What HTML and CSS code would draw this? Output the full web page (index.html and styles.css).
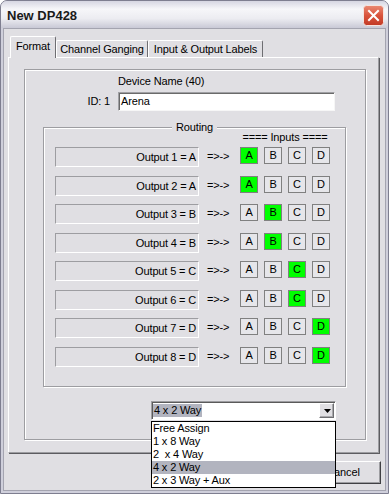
FILE: index.html
```html
<!DOCTYPE html>
<html>
<head>
<meta charset="utf-8">
<title>New DP428</title>
<link rel="stylesheet" href="styles.css">
</head>
<body>
<div class="window">
  <div class="titlebar">
    <span class="title">New DP428</span>
    <span class="close">
      <svg width="21" height="21" viewBox="0 0 21 21">
        <defs>
          <linearGradient id="cg" x1="0" y1="0" x2="0" y2="1">
            <stop offset="0" stop-color="#ea8a74"/>
            <stop offset="0.5" stop-color="#d9533c"/>
            <stop offset="1" stop-color="#c23a26"/>
          </linearGradient>
        </defs>
        <rect x="0.5" y="0.5" width="20" height="20" rx="3" fill="url(#cg)" stroke="#f4e4e0"/>
        <path d="M6 6 L15 15 M15 6 L6 15" stroke="#fff" stroke-width="2" stroke-linecap="square"/>
      </svg>
    </span>
  </div>
  <div class="frame">
    <div class="client">
      <div class="tabs">
        <div class="tab tab-format sel">Format</div>
        <div class="tab tab-gang">Channel Ganging</div>
        <div class="tab tab-labels">Input &amp; Output Labels</div>
      </div>
      <div class="panel">
        <div class="group">
          <div class="device">
            <span></span><span class="dn">Device Name (40)</span>
            <span class="idl">ID: 1</span><div class="field">Arena</div>
          </div>
          <div class="routing">
            <div class="rtitle">Routing</div>
            <div class="inhead">==== Inputs ====</div>
            <div class="rows">
              <div class="row"><div class="out">Output 1 = A</div><div class="arrow">=&gt;-&gt;</div><div class="btns"><span class="b on">A</span><span class="b">B</span><span class="b">C</span><span class="b">D</span></div></div>
              <div class="row"><div class="out">Output 2 = A</div><div class="arrow">=&gt;-&gt;</div><div class="btns"><span class="b on">A</span><span class="b">B</span><span class="b">C</span><span class="b">D</span></div></div>
              <div class="row"><div class="out">Output 3 = B</div><div class="arrow">=&gt;-&gt;</div><div class="btns"><span class="b">A</span><span class="b on">B</span><span class="b">C</span><span class="b">D</span></div></div>
              <div class="row"><div class="out">Output 4 = B</div><div class="arrow">=&gt;-&gt;</div><div class="btns"><span class="b">A</span><span class="b on">B</span><span class="b">C</span><span class="b">D</span></div></div>
              <div class="row"><div class="out">Output 5 = C</div><div class="arrow">=&gt;-&gt;</div><div class="btns"><span class="b">A</span><span class="b">B</span><span class="b on">C</span><span class="b">D</span></div></div>
              <div class="row"><div class="out">Output 6 = C</div><div class="arrow">=&gt;-&gt;</div><div class="btns"><span class="b">A</span><span class="b">B</span><span class="b on">C</span><span class="b">D</span></div></div>
              <div class="row"><div class="out">Output 7 = D</div><div class="arrow">=&gt;-&gt;</div><div class="btns"><span class="b">A</span><span class="b">B</span><span class="b">C</span><span class="b on">D</span></div></div>
              <div class="row"><div class="out">Output 8 = D</div><div class="arrow">=&gt;-&gt;</div><div class="btns"><span class="b">A</span><span class="b">B</span><span class="b">C</span><span class="b on">D</span></div></div>
            </div>
          </div>
          <div class="combo">
            <div class="cval"><span class="csel">4 x 2 Way</span></div>
            <div class="cbtn">
              <svg width="7" height="4" viewBox="0 0 7 4"><path d="M0 0 H7 L3.5 4 Z" fill="#000"/></svg>
            </div>
            <ul class="list">
              <li>Free Assign</li>
              <li>1 x 8 Way</li>
              <li>2  x 4 Way</li>
              <li class="hl">4 x 2 Way</li>
              <li>2 x 3 Way + Aux</li>
            </ul>
          </div>
        </div>
      </div>
      <div class="actions">
        <div class="btn">Cancel</div>
      </div>
    </div>
  </div>
</div>
</body>
</html>
```
FILE: styles.css
```css
html, body {
  margin: 0;
  padding: 0;
  background: #ffffff;
}
body {
  font-family: "Liberation Sans", Arial, sans-serif;
  font-size: 11px;
  letter-spacing: -0.15px;
  color: #000;
}
.window {
  width: 389px;
  height: 494px;
  box-sizing: border-box;
  border: 1px solid #7e7e90;
  border-radius: 7px 7px 0 0;
  background: #cfcfdb;
  display: flex;
  flex-direction: column;
  overflow: hidden;
}
.titlebar {
  height: 27px;
  flex: none;
  display: flex;
  align-items: flex-start;
  padding-left: 6px;
  background: linear-gradient(#d6d6e2 0%, #f6f6f9 30%, #ececf1 65%, #c9c9d6 100%);
}
.title {
  margin-top: 7px;
  font-size: 13px;
  line-height: 15px;
  font-weight: bold;
  letter-spacing: 0;
  color: #1a1a1a;
}
.close {
  margin-left: auto;
  margin-right: 4px;
  margin-top: 4px;
  width: 21px;
  height: 21px;
  display: block;
}
.close svg { display: block; }
.frame {
  flex: 1;
  display: flex;
  padding: 0 2px 2px 2px;
}
.client {
  flex: 1;
  border: 1px solid #a4a4b0;
  background: #e0dfe3;
  display: flex;
  flex-direction: column;
}
.tabs {
  display: flex;
  align-items: flex-end;
  margin: 7px 0 0 6px;
  height: 21px;
}
.tab {
  box-sizing: border-box;
  height: 17px;
  border: 1px solid;
  border-color: #ffffff #6e6e72 transparent #ffffff;
  border-bottom: none;
  border-radius: 2px 2px 0 0;
  text-align: center;
  line-height: 13px;
  padding-top: 2px;
  background: #e0dfe3;
  white-space: nowrap;
}
.tab.sel {
  height: 22px;
  margin-bottom: -1px;
  padding-top: 3px;
  position: relative;
  z-index: 1;
}
.tab-format { width: 46px; }
.tab-gang { width: 92px; }
.tab-labels { width: 115px; }
.panel {
  margin-left: 4px;
  width: 371px;
  height: 396px;
  box-sizing: border-box;
  border: 1px solid;
  border-color: #ffffff #9d9da1 #9d9da1 #ffffff;
  box-shadow: 1px 1px 0 #5c5c60;
  flex: none;
}
.group {
  margin: 11px 0 0 15px;
  width: 342px;
  height: 371px;
  box-sizing: border-box;
  border: 1px solid #9d9da1;
  box-shadow: inset 1px 1px 0 #ffffff, 1px 1px 0 #ffffff;
}
.device {
  display: grid;
  grid-template-columns: 85px 217px;
  column-gap: 8px;
  row-gap: 4px;
  padding-top: 5px;
  align-items: center;
  line-height: 13px;
}
.idl { text-align: right; }
.field {
  box-sizing: border-box;
  height: 19px;
  border: 1px solid;
  border-color: #a0a0a4 #f6f6f6 #f6f6f6 #a0a0a4;
  box-shadow: inset 1px 1px 0 #6a6a6a;
  background: #ffffff;
  padding-left: 2px;
  line-height: 17px;
}
.routing {
  margin: 16px 0 0 18px;
  width: 303px;
  height: 260px;
  box-sizing: border-box;
  border: 1px solid #9d9da1;
  box-shadow: inset 1px 1px 0 #ffffff, 1px 1px 0 #ffffff;
}
.rtitle {
  margin: -7px auto 0;
  width: fit-content;
  padding: 0 4px;
  background: #e0dfe3;
  line-height: 13px;
}
.inhead {
  margin: -3px 0 0 196px;
  width: 90px;
  text-align: center;
  line-height: 13px;
  white-space: nowrap;
}
.rows {
  margin: 3px 0 0 11px;
  display: flex;
  flex-direction: column;
  gap: 8.57px;
}
.row {
  display: flex;
  height: 20px;
  align-items: flex-start;
}
.out {
  width: 144px;
  height: 20px;
  box-sizing: border-box;
  border: 1px solid;
  border-color: #9d9da1 #ffffff #ffffff #9d9da1;
  text-align: right;
  padding-right: 2px;
  line-height: 18px;
}
.arrow {
  margin-left: 8px;
  width: 33px;
  line-height: 19px;
}
.btns {
  display: flex;
  gap: 6px;
}
.b {
  width: 18px;
  height: 17px;
  box-sizing: border-box;
  border: 1px solid #808080;
  text-align: center;
  line-height: 15px;
  background: #e6e6ea;
}
.b.on { background: #00ff00; }
.combo {
  position: relative;
  margin: 14px 0 0 126px;
  width: 185px;
  height: 19px;
  box-sizing: border-box;
  border: 1px solid;
  border-color: #9d9da1 #ffffff #ffffff #9d9da1;
  box-shadow: inset 1px 1px 0 #5a5a5a;
  background: #ffffff;
  padding: 1px;
  display: flex;
}
.cval {
  flex: 1;
  line-height: 13px;
  padding-top: 1px;
}
.csel {
  display: inline-block;
  background: #b2b4bf;
  padding: 0 1px;
  height: 13px;
}
.cbtn {
  width: 15px;
  height: 15px;
  box-sizing: border-box;
  border: 1px solid;
  border-color: #ffffff #6e6e72 #6e6e72 #ffffff;
  box-shadow: inset -1px -1px 0 #a8a8ac;
  background: #e0dfe3;
  display: flex;
  align-items: center;
  justify-content: center;
}
.cbtn svg { display: block; margin-left: 1px; }
.list {
  position: absolute;
  z-index: 10;
  top: 19px;
  left: -1px;
  width: 185px;
  box-sizing: border-box;
  margin: 0;
  padding: 0;
  list-style: none;
  border: 1px solid #000;
  background: #ffffff;
}
.list li {
  line-height: 13px;
  height: 13px;
  padding-left: 1px;
  white-space: pre;
}
.list li.hl { background: #b2b4bf; }
.actions {
  display: flex;
  margin-top: 8px;
}
.btn {
  margin-left: 301px;
  width: 76px;
  height: 23px;
  box-sizing: border-box;
  border: 1px solid;
  border-color: #ffffff #404044 #404044 #ffffff;
  box-shadow: inset -1px -1px 0 #9d9da1;
  text-align: center;
  line-height: 21px;
  background: #e0dfe3;
}
```
